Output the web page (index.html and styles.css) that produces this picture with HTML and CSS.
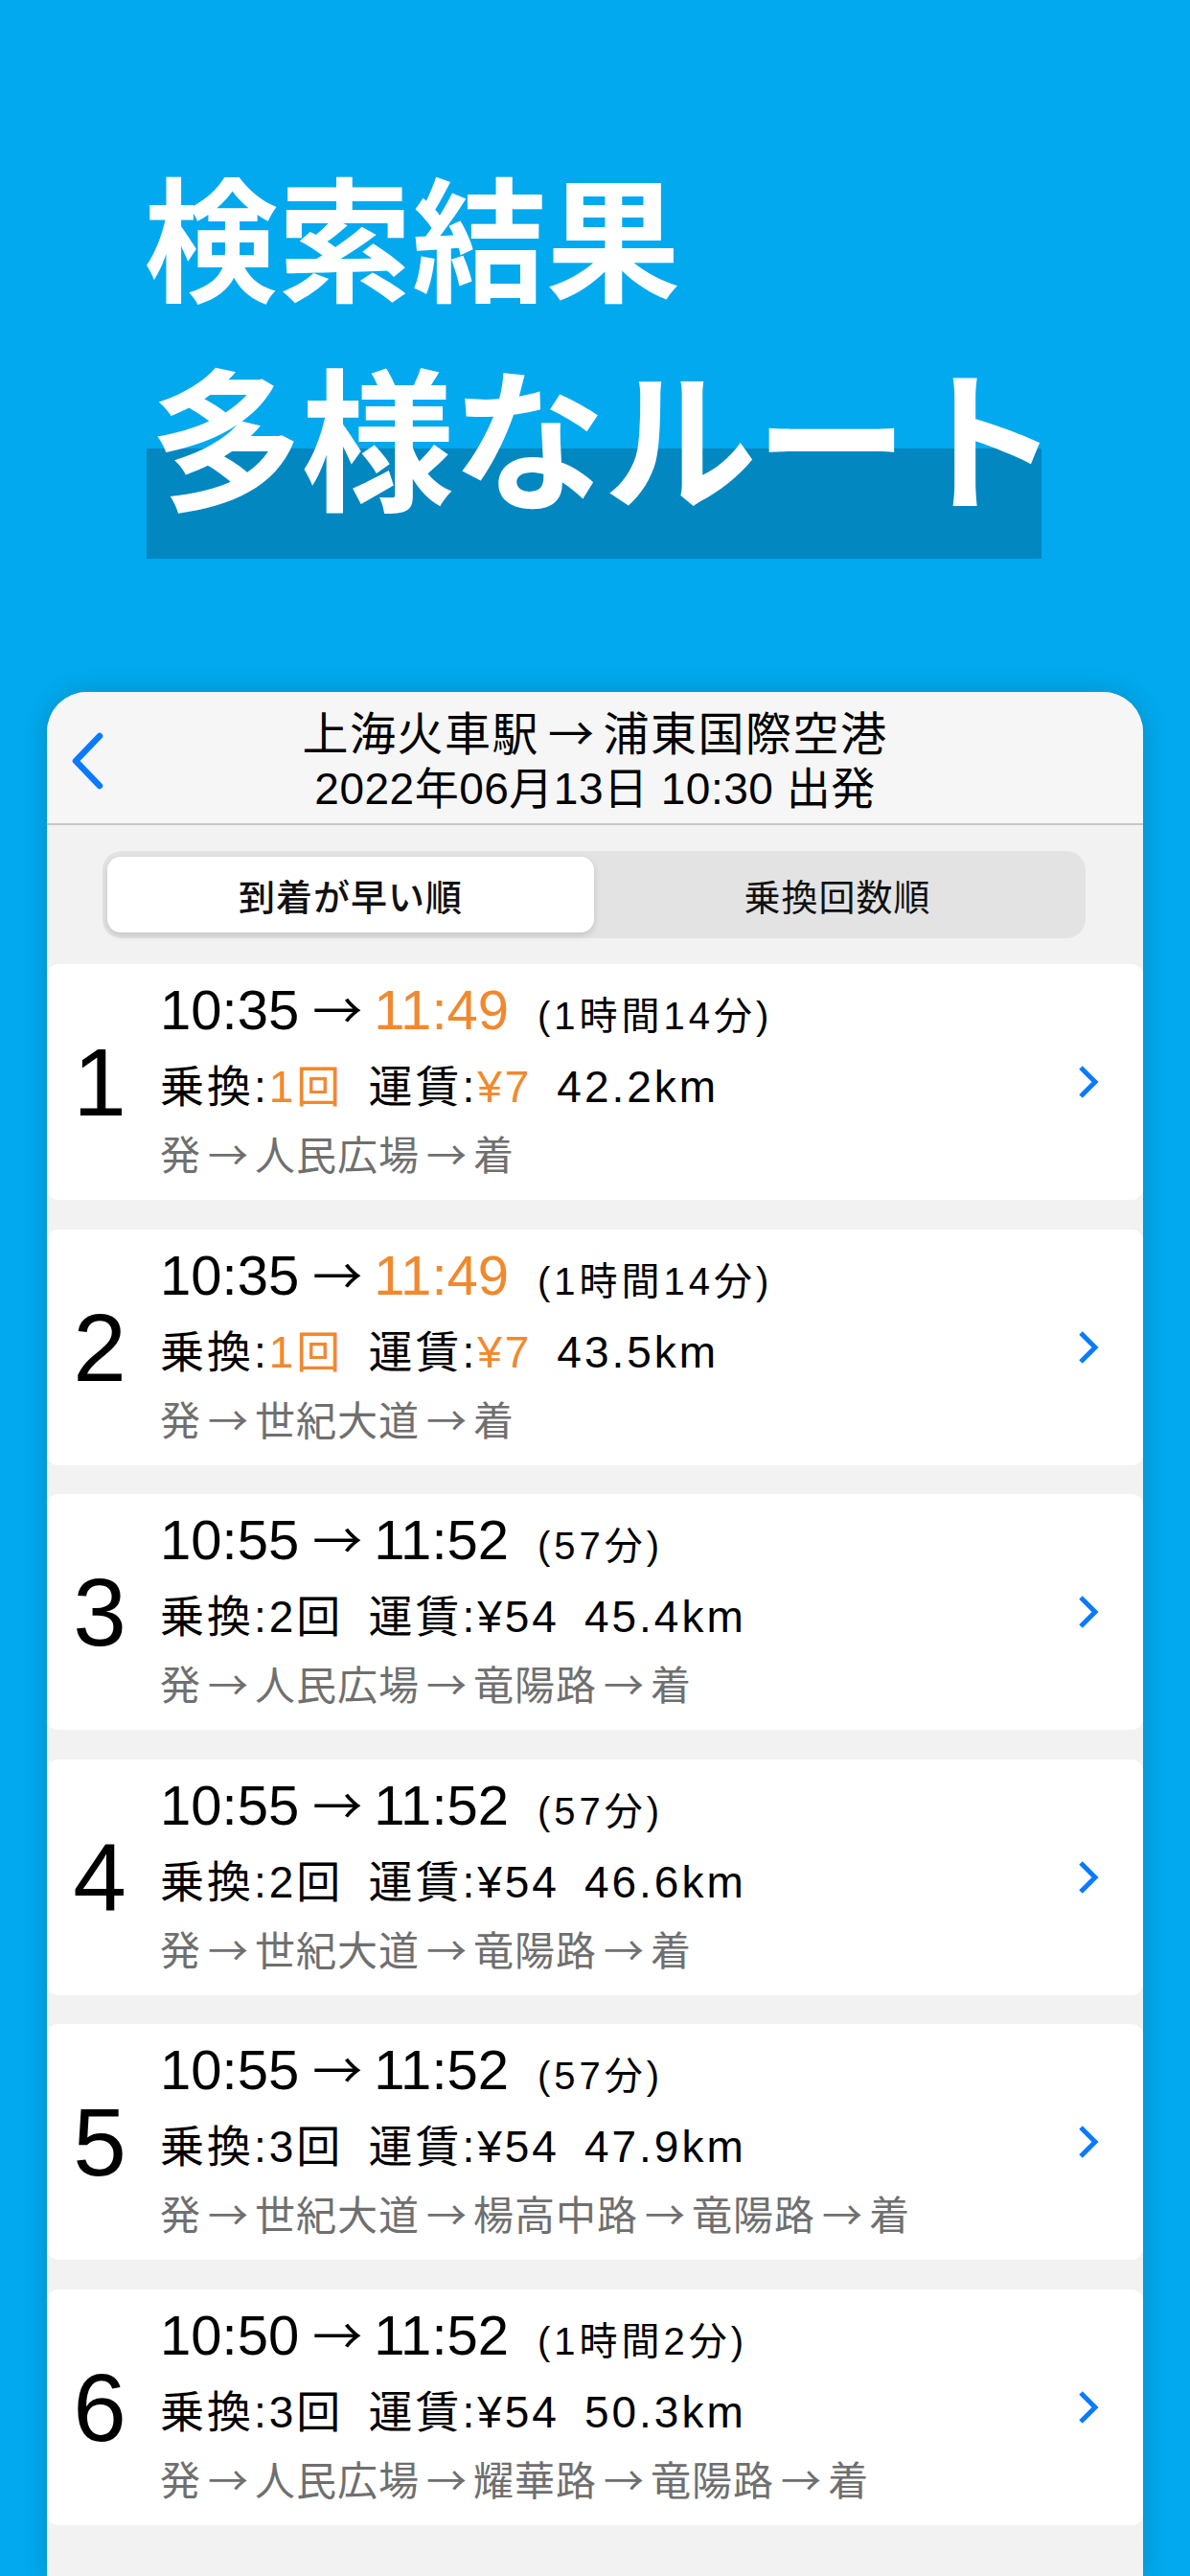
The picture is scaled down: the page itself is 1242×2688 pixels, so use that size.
FILE: index.html
```html
<!DOCTYPE html>
<html lang="ja">
<head>
<meta charset="utf-8">
<title>検索結果</title>
<link rel="stylesheet" href="styles.css">
</head>
<body>
<div class="hero">
  <div class="hero-l1">検索結果</div>
  <div class="hero-l2"><span class="hero-mark">多様なルート</span></div>
</div>

<div class="card">
  <div class="head">
    <div class="back">
      <svg width="40" height="64" viewBox="0 0 40 64"><path d="M30 6 L5 32 L30 58" fill="none" stroke="#0A7AFF" stroke-width="6.5" stroke-linecap="round" stroke-linejoin="round"/></svg>
    </div>
    <div class="head-text">
      <div class="title">上海火車駅<span class="harr">→</span>浦東国際空港</div>
      <div class="date">2022年06月13日 10:30 出発</div>
    </div>
    <div></div>
  </div>

  <div class="seg">
    <div class="seg-item on">到着が早い順</div>
    <div class="seg-item">乗換回数順</div>
  </div>

  <div class="list">
    <div class="route">
      <div class="num">1</div>
      <div class="info">
        <div class="l1">10:35<span class="arr">→</span><span class="o">11:49</span><span class="dur">(1時間14分)</span></div>
        <div class="l2">乗換:<span class="o">1回</span><span class="g">運賃:</span><span class="o">¥7</span><span class="g">42.2km</span></div>
        <div class="l3">発<span class="rarr">→</span>人民広場<span class="rarr">→</span>着</div>
      </div>
      <svg class="chev" width="22" height="36" viewBox="0 0 22 36"><path d="M3 3 L18 18 L3 33" fill="none" stroke="#0A7AFF" stroke-width="5"/></svg>
    </div>

    <div class="route">
      <div class="num">2</div>
      <div class="info">
        <div class="l1">10:35<span class="arr">→</span><span class="o">11:49</span><span class="dur">(1時間14分)</span></div>
        <div class="l2">乗換:<span class="o">1回</span><span class="g">運賃:</span><span class="o">¥7</span><span class="g">43.5km</span></div>
        <div class="l3">発<span class="rarr">→</span>世紀大道<span class="rarr">→</span>着</div>
      </div>
      <svg class="chev" width="22" height="36" viewBox="0 0 22 36"><path d="M3 3 L18 18 L3 33" fill="none" stroke="#0A7AFF" stroke-width="5"/></svg>
    </div>

    <div class="route">
      <div class="num">3</div>
      <div class="info">
        <div class="l1">10:55<span class="arr">→</span>11:52<span class="dur">(57分)</span></div>
        <div class="l2">乗換:2回<span class="g">運賃:¥54</span><span class="g">45.4km</span></div>
        <div class="l3">発<span class="rarr">→</span>人民広場<span class="rarr">→</span>竜陽路<span class="rarr">→</span>着</div>
      </div>
      <svg class="chev" width="22" height="36" viewBox="0 0 22 36"><path d="M3 3 L18 18 L3 33" fill="none" stroke="#0A7AFF" stroke-width="5"/></svg>
    </div>

    <div class="route">
      <div class="num">4</div>
      <div class="info">
        <div class="l1">10:55<span class="arr">→</span>11:52<span class="dur">(57分)</span></div>
        <div class="l2">乗換:2回<span class="g">運賃:¥54</span><span class="g">46.6km</span></div>
        <div class="l3">発<span class="rarr">→</span>世紀大道<span class="rarr">→</span>竜陽路<span class="rarr">→</span>着</div>
      </div>
      <svg class="chev" width="22" height="36" viewBox="0 0 22 36"><path d="M3 3 L18 18 L3 33" fill="none" stroke="#0A7AFF" stroke-width="5"/></svg>
    </div>

    <div class="route">
      <div class="num">5</div>
      <div class="info">
        <div class="l1">10:55<span class="arr">→</span>11:52<span class="dur">(57分)</span></div>
        <div class="l2">乗換:3回<span class="g">運賃:¥54</span><span class="g">47.9km</span></div>
        <div class="l3">発<span class="rarr">→</span>世紀大道<span class="rarr">→</span>楊高中路<span class="rarr">→</span>竜陽路<span class="rarr">→</span>着</div>
      </div>
      <svg class="chev" width="22" height="36" viewBox="0 0 22 36"><path d="M3 3 L18 18 L3 33" fill="none" stroke="#0A7AFF" stroke-width="5"/></svg>
    </div>

    <div class="route">
      <div class="num">6</div>
      <div class="info">
        <div class="l1">10:50<span class="arr">→</span>11:52<span class="dur">(1時間2分)</span></div>
        <div class="l2">乗換:3回<span class="g">運賃:¥54</span><span class="g">50.3km</span></div>
        <div class="l3">発<span class="rarr">→</span>人民広場<span class="rarr">→</span>耀華路<span class="rarr">→</span>竜陽路<span class="rarr">→</span>着</div>
      </div>
      <svg class="chev" width="22" height="36" viewBox="0 0 22 36"><path d="M3 3 L18 18 L3 33" fill="none" stroke="#0A7AFF" stroke-width="5"/></svg>
    </div>
  </div>
</div>
</body>
</html>
```

FILE: styles.css
```css
html, body {
  margin: 0;
  padding: 0;
}
body {
  background: #02A9EE;
  font-family: "Liberation Sans", "Noto Sans CJK JP", sans-serif;
  color: #000;
  min-height: 2688px;
  display: flex;
  flex-direction: column;
  overflow: hidden;
}

/* hero */
.hero {
  padding: 173px 0 0 150px;
  color: #fff;
  font-family: "Noto Sans CJK JP", sans-serif;
  font-weight: 700;
}
.hero-l1 {
  font-size: 140px;
  line-height: 140px;
  white-space: nowrap;
}
.hero-l2 {
  display: flex;
  margin-top: 38px;
}
.hero-mark {
  display: block;
  box-sizing: border-box;
  width: 934px;
  margin-left: 3px;
  padding: 0 0 32px 3px;
  font-size: 160px;
  line-height: 200px;
  letter-spacing: -2px;
  white-space: nowrap;
  background: linear-gradient(to bottom, transparent 117px, #0287C1 117px);
}

/* card */
.card {
  flex: 1;
  margin: 139px 49px 0;
  background: #f2f2f2;
  border-radius: 42px 42px 0 0;
  overflow: hidden;
  box-shadow: 0 0 26px rgba(0, 0, 0, 0.16);
}
.head {
  box-sizing: border-box;
  height: 139px;
  display: grid;
  grid-template-columns: 1fr auto 1fr;
  align-items: center;
  background: #f6f6f6;
  border-bottom: 2px solid #c6c6c6;
}
.back {
  justify-self: start;
  margin-left: 25px;
  display: flex;
  margin-top: 6px;
}
.head-text {
  text-align: center;
  padding-top: 2px;
}
.title {
  font-size: 48px;
  line-height: 56px;
  letter-spacing: 1.5px;
  white-space: nowrap;
}
.harr {
  font-family: "Noto Sans CJK JP", sans-serif;
  margin: 0 8px 0 9px;
}
.date {
  margin-top: 2px;
  font-size: 46px;
  line-height: 52px;
  letter-spacing: 0.5px;
  white-space: nowrap;
}

/* segmented control */
.seg {
  box-sizing: border-box;
  height: 91px;
  margin: 27px 60px 27px 58px;
  padding: 6px 5px;
  background: #e3e3e3;
  border-radius: 20px;
  display: flex;
}
.seg-item {
  flex: 1;
  display: flex;
  align-items: center;
  justify-content: center;
  font-family: "Noto Sans CJK JP", sans-serif;
  font-size: 38px;
  letter-spacing: 1px;
  color: #111;
  border-radius: 14px;
}
.seg-item.on {
  background: #fff;
  font-weight: 500;
  box-shadow: 0 3px 7px rgba(0, 0, 0, 0.14);
}

/* list */
.list {
  display: flex;
  flex-direction: column;
  gap: 30.5px;
}
.route {
  height: 246px;
  background: #fff;
  border-radius: 12px;
  display: flex;
  align-items: center;
}
.num {
  width: 110px;
  flex: none;
  text-align: center;
  font-size: 100px;
  line-height: 100px;
}
.info {
  flex: 1;
  align-self: stretch;
  margin-left: 8px;
  padding-top: 12px;
  white-space: nowrap;
}
.l1 {
  font-size: 58px;
  line-height: 68px;
}
.arr {
  font-family: "Noto Sans CJK JP", sans-serif;
  font-size: 52px;
  margin: 0 12px 0 14px;
}
.o {
  color: #F0892E;
}
.dur {
  font-size: 40px;
  letter-spacing: 4px;
  margin-left: 30px;
}
.l2 {
  margin-top: 10px;
  font-size: 46px;
  line-height: 60px;
  letter-spacing: 3px;
}
.g {
  margin-left: 26px;
}
.l3 {
  margin-top: 14px;
  font-size: 42px;
  line-height: 50px;
  letter-spacing: 1px;
  color: #6f6f6f;
}
.rarr {
  font-family: "Noto Sans CJK JP", sans-serif;
  margin: 0 6px 0 7px;
}
.chev {
  flex: none;
  margin-right: 46px;
}
```
